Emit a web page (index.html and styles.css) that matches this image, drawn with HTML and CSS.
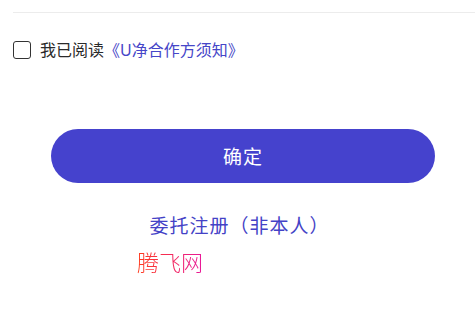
FILE: index.html
```html
<!DOCTYPE html>
<html lang="zh-CN">
<head>
    <meta charset="UTF-8">
    <meta name="viewport" content="width=device-width, initial-scale=1.0">
    <title>注册</title>
    <link rel="stylesheet" href="styles.css">
</head>
<body>
    <div class="page">
        <div class="divider"></div>

        <label class="agree-row">
            <span class="checkbox"></span>
            <span class="agree-text">我已阅读</span>
            <a class="agree-link" href="#">《U净合作方须知》</a>
        </label>

        <button class="confirm-btn">确定</button>

        <div class="proxy-row">
            <a class="proxy-link" href="#">委托注册（非本人）</a>
        </div>

        <div class="brand">腾飞网</div>
    </div>
</body>
</html>
```

FILE: styles.css
```css
body {
    font-family: "Noto Sans", "Noto Sans CJK SC", sans-serif;
    margin: 0;
    background-color: #fff;
    color: #222;
}
.page {
    padding-top: 12px;
}
.divider {
    height: 1px;
    margin-left: 13px;
    background-color: #ececec;
}
.agree-row {
    display: flex;
    align-items: center;
    margin: 26px 0 0 13px;
    font-size: 16px;
    line-height: 22px;
}
.checkbox {
    box-sizing: border-box;
    width: 18px;
    height: 18px;
    border: 1.5px solid #333;
    border-radius: 3px;
    margin-right: 9px;
}
.agree-text {
    color: #2a2a2a;
}
.agree-link {
    color: #4646c8;
    text-decoration: none;
}
.confirm-btn {
    display: block;
    width: 384px;
    height: 54px;
    margin: 68px 0 0 51px;
    border: none;
    border-radius: 27px;
    background-color: #4542cd;
    color: #fff;
    font-family: inherit;
    font-size: 19px;
    letter-spacing: 1px;
    cursor: pointer;
}
.proxy-row {
    display: flex;
    justify-content: center;
    margin-top: 28px;
}
.proxy-link {
    color: #4442c6;
    font-size: 19px;
    letter-spacing: 1px;
    text-decoration: none;
    margin-left: 4px;
}
.brand {
    margin: 6px 0 0 137px;
    font-size: 22px;
    font-weight: 300;
    width: max-content;
    background: linear-gradient(90deg, #ff3c1c, #e8189a);
    -webkit-background-clip: text;
    background-clip: text;
    color: transparent;
}
```
